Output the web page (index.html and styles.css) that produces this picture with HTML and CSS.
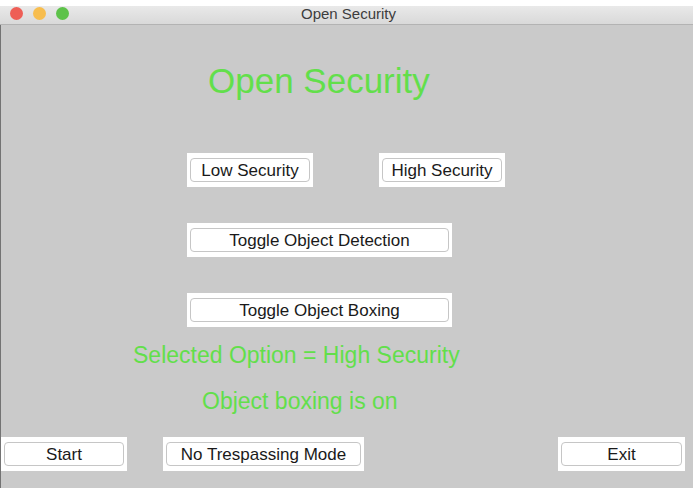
FILE: index.html
```html
<!DOCTYPE html>
<html>
<head>
<meta charset="utf-8">
<title>Open Security</title>
<link rel="stylesheet" href="styles.css">
</head>
<body>
<div class="window">
  <div class="titlebar">
    <div class="lights">
      <span class="light red"></span>
      <span class="light yellow"></span>
      <span class="light green"></span>
    </div>
    <div class="title">Open Security</div>
  </div>
  <div class="content">
    <h1 class="heading">Open Security</h1>
    <div class="row row-levels">
      <div class="panel"><div class="btn w-level">Low Security</div></div>
      <div class="panel"><div class="btn w-level">High Security</div></div>
    </div>
    <div class="row row-toggle first-toggle">
      <div class="panel"><div class="btn w-toggle">Toggle Object Detection</div></div>
    </div>
    <div class="row row-toggle">
      <div class="panel"><div class="btn w-toggle">Toggle Object Boxing</div></div>
    </div>
    <div class="status status-option">Selected Option = High Security</div>
    <div class="status status-boxing">Object boxing is on</div>
    <div class="row row-bottom">
      <div class="panel"><div class="btn w-start">Start</div></div>
      <div class="panel panel-trespass"><div class="btn w-trespass">No Trespassing Mode</div></div>
      <div class="panel panel-exit"><div class="btn w-exit">Exit</div></div>
    </div>
  </div>
</div>
</body>
</html>
```

FILE: styles.css
```css
html, body {
  margin: 0;
  padding: 0;
  background: #ffffff;
}

body {
  font-family: "Liberation Sans", Arial, sans-serif;
}

.window {
  width: 693px;
  margin-top: 6px;
}

.titlebar {
  position: relative;
  height: 18px;
  background: linear-gradient(#e9e9e9, #d9d9d9);
  border-bottom: 1px solid #b3b3b3;
  display: flex;
  align-items: flex-start;
  justify-content: center;
}

.lights {
  position: absolute;
  left: 10px;
  top: 0;
  height: 14px;
  display: flex;
  align-items: center;
  gap: 10px;
}

.light {
  width: 13px;
  height: 13px;
  border-radius: 50%;
  display: block;
}

.red { background: #ee5e56; }
.yellow { background: #f7bd4e; }
.green { background: #5dc24a; }

.title {
  font-size: 15px;
  color: #3d3d3d;
  line-height: 15px;
  margin-left: 4px;
}

.content {
  height: 463px;
  background: #cacaca;
  box-shadow: inset 1px 0 0 #737373;
  overflow: hidden;
}

.heading {
  margin: 35px 0 0 0;
  padding-left: 208px;
  font-size: 35px;
  font-weight: normal;
  line-height: 42px;
  color: #62df4b;
  white-space: nowrap;
}

.row {
  display: flex;
}

.row-levels {
  margin-top: 51px;
  padding-left: 187px;
  gap: 66px;
}

.row-toggle {
  margin-top: 36px;
  padding-left: 187px;
}

.first-toggle {
  margin-top: 36px;
}

.panel {
  background: #ffffff;
  padding: 5px 3px;
}

.btn {
  box-sizing: border-box;
  height: 24px;
  border: 1px solid #c6c6c6;
  border-radius: 4px;
  background: #ffffff;
  font-size: 17px;
  line-height: 24px;
  color: #1a1a1a;
  text-align: center;
  white-space: nowrap;
}

.w-level { width: 120px; }
.w-toggle { width: 259px; }
.w-start { width: 120px; }
.w-trespass { width: 195px; }
.w-exit { width: 121px; }

.status {
  color: #62df4b;
  font-size: 23px;
  line-height: 28px;
  white-space: nowrap;
}

.status-option {
  margin-top: 14px;
  padding-left: 133px;
}

.status-boxing {
  margin-top: 18px;
  padding-left: 202px;
}

.row-bottom {
  margin-top: 22px;
  padding-left: 1px;
}

.panel-trespass {
  margin-left: 36px;
}

.panel-exit {
  margin-left: 194px;
}
```
